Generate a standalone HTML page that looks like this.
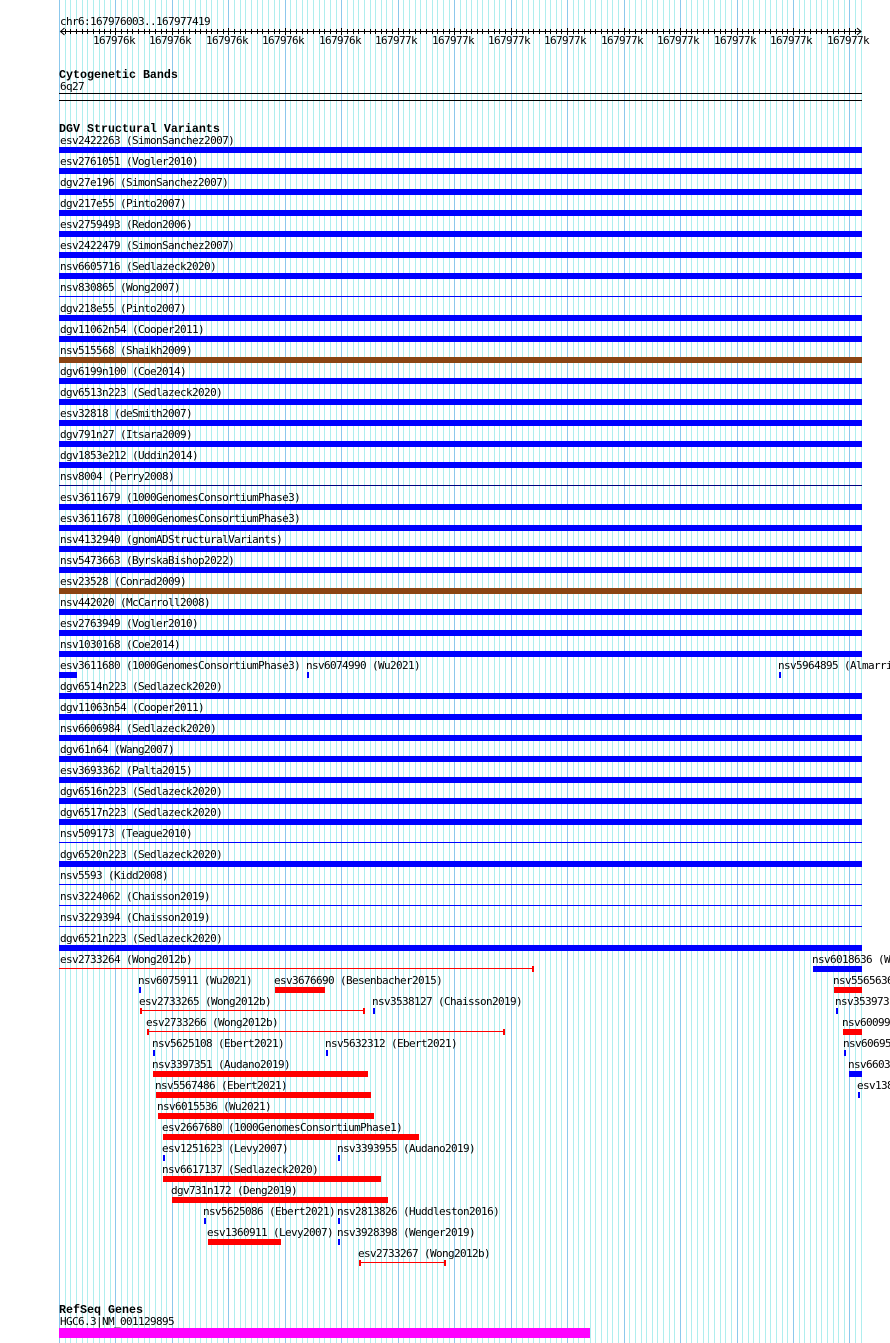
<!DOCTYPE html>
<html><head><meta charset="utf-8"><title>chr6:167976003..167977419</title>
<style>
html,body{margin:0;padding:0;background:#fff;width:890px;height:1343px;overflow:hidden}
svg{display:block;position:absolute;left:0;top:0}
text{font-family:"DejaVu Sans Mono","Liberation Mono",monospace;font-size:11px;fill:#000;letter-spacing:-.62px;white-space:pre}
text.h{font-family:"Liberation Mono","DejaVu Sans Mono",monospace;font-weight:bold;font-size:11.67px;letter-spacing:0}
</style></head><body>
<svg width="890" height="1343" viewBox="0 0 890 1343" xmlns="http://www.w3.org/2000/svg">
<g shape-rendering="crispEdges" fill="none" transform="translate(.5,0)">
<path stroke="#AFEEEE" d="M65 0v1343M70 0v1343M76 0v1343M82 0v1343M87 0v1343M93 0v1343M99 0v1343M104 0v1343M110 0v1343M121 0v1343M127 0v1343M132 0v1343M138 0v1343M144 0v1343M149 0v1343M155 0v1343M161 0v1343M166 0v1343M178 0v1343M183 0v1343M189 0v1343M195 0v1343M200 0v1343M206 0v1343M211 0v1343M217 0v1343M223 0v1343M234 0v1343M240 0v1343M245 0v1343M251 0v1343M257 0v1343M262 0v1343M268 0v1343M274 0v1343M279 0v1343M290 0v1343M296 0v1343M302 0v1343M307 0v1343M313 0v1343M319 0v1343M324 0v1343M330 0v1343M336 0v1343M347 0v1343M353 0v1343M358 0v1343M364 0v1343M370 0v1343M375 0v1343M381 0v1343M386 0v1343M392 0v1343M403 0v1343M409 0v1343M415 0v1343M420 0v1343M426 0v1343M432 0v1343M437 0v1343M443 0v1343M449 0v1343M460 0v1343M466 0v1343M471 0v1343M477 0v1343M482 0v1343M488 0v1343M494 0v1343M499 0v1343M505 0v1343M516 0v1343M522 0v1343M528 0v1343M533 0v1343M539 0v1343M545 0v1343M550 0v1343M556 0v1343M561 0v1343M573 0v1343M578 0v1343M584 0v1343M590 0v1343M595 0v1343M601 0v1343M607 0v1343M612 0v1343M618 0v1343M629 0v1343M635 0v1343M641 0v1343M646 0v1343M652 0v1343M657 0v1343M663 0v1343M669 0v1343M674 0v1343M686 0v1343M691 0v1343M697 0v1343M703 0v1343M708 0v1343M714 0v1343M720 0v1343M725 0v1343M731 0v1343M742 0v1343M748 0v1343M753 0v1343M759 0v1343M765 0v1343M770 0v1343M776 0v1343M782 0v1343M787 0v1343M799 0v1343M804 0v1343M810 0v1343M816 0v1343M821 0v1343M827 0v1343M833 0v1343M838 0v1343M844 0v1343M855 0v1343M861 0v1343"/>
<path stroke="#8CC8EC" d="M59 0v1343M115 0v1343M172 0v1343M228 0v1343M285 0v1343M341 0v1343M398 0v1343M454 0v1343M511 0v1343M567 0v1343M624 0v1343M680 0v1343M737 0v1343M793 0v1343M849 0v1343"/>
<!-- ruler -->
<path stroke="#000" d="M60 31.5H861M65 29v5M70 29v5M76 29v5M82 29v5M87 29v5M93 29v5M99 29v5M104 29v5M110 29v5M121 29v5M127 29v5M132 29v5M138 29v5M144 29v5M149 29v5M155 29v5M161 29v5M166 29v5M178 29v5M183 29v5M189 29v5M195 29v5M200 29v5M206 29v5M211 29v5M217 29v5M223 29v5M234 29v5M240 29v5M245 29v5M251 29v5M257 29v5M262 29v5M268 29v5M274 29v5M279 29v5M290 29v5M296 29v5M302 29v5M307 29v5M313 29v5M319 29v5M324 29v5M330 29v5M336 29v5M347 29v5M353 29v5M358 29v5M364 29v5M370 29v5M375 29v5M381 29v5M386 29v5M392 29v5M403 29v5M409 29v5M415 29v5M420 29v5M426 29v5M432 29v5M437 29v5M443 29v5M449 29v5M460 29v5M466 29v5M471 29v5M477 29v5M482 29v5M488 29v5M494 29v5M499 29v5M505 29v5M516 29v5M522 29v5M528 29v5M533 29v5M539 29v5M545 29v5M550 29v5M556 29v5M561 29v5M573 29v5M578 29v5M584 29v5M590 29v5M595 29v5M601 29v5M607 29v5M612 29v5M618 29v5M629 29v5M635 29v5M641 29v5M646 29v5M652 29v5M657 29v5M663 29v5M669 29v5M674 29v5M686 29v5M691 29v5M697 29v5M703 29v5M708 29v5M714 29v5M720 29v5M725 29v5M731 29v5M742 29v5M748 29v5M753 29v5M759 29v5M765 29v5M770 29v5M776 29v5M782 29v5M787 29v5M799 29v5M804 29v5M810 29v5M816 29v5M821 29v5M827 29v5M833 29v5M838 29v5M844 29v5M855 29v5M115 28v7M172 28v7M228 28v7M285 28v7M341 28v7M398 28v7M454 28v7M511 28v7M567 28v7M624 28v7M680 28v7M737 28v7M793 28v7M849 28v7"/>
</g>
<path fill="none" stroke="#000" d="M64.5 28L60.5 31.5L64.5 35M857 28L861 31.5L857 35"/>
<g shape-rendering="crispEdges">
<rect x="59" y="93" width="803" height="1" fill="#000"/>
<rect x="59" y="100" width="803" height="1" fill="#000"/>
<g fill="#0000ff">
<rect x="59" y="147" width="803" height="6"/><rect x="59" y="168" width="803" height="6"/><rect x="59" y="189" width="803" height="6"/><rect x="59" y="210" width="803" height="6"/><rect x="59" y="231" width="803" height="6"/><rect x="59" y="252" width="803" height="6"/><rect x="59" y="273" width="803" height="6"/>
<rect x="59" y="296" width="803" height="1"/>
<rect x="59" y="315" width="803" height="6"/><rect x="59" y="336" width="803" height="6"/>
<rect x="59" y="378" width="803" height="6"/><rect x="59" y="399" width="803" height="6"/><rect x="59" y="420" width="803" height="6"/><rect x="59" y="441" width="803" height="6"/><rect x="59" y="462" width="803" height="6"/>
<rect x="59" y="504" width="803" height="6"/><rect x="59" y="525" width="803" height="6"/><rect x="59" y="546" width="803" height="6"/><rect x="59" y="567" width="803" height="6"/>
<rect x="59" y="609" width="803" height="6"/><rect x="59" y="630" width="803" height="6"/><rect x="59" y="651" width="803" height="6"/>
<rect x="59" y="672" width="18" height="6"/><rect x="307" y="672" width="2" height="6"/><rect x="779" y="672" width="2" height="6"/>
<rect x="59" y="693" width="803" height="6"/><rect x="59" y="714" width="803" height="6"/><rect x="59" y="735" width="803" height="6"/><rect x="59" y="756" width="803" height="6"/><rect x="59" y="777" width="803" height="6"/><rect x="59" y="798" width="803" height="6"/><rect x="59" y="819" width="803" height="6"/>
<rect x="59" y="842" width="803" height="1"/>
<rect x="59" y="861" width="803" height="6"/>
<rect x="59" y="884" width="803" height="1"/><rect x="59" y="905" width="803" height="1"/><rect x="59" y="926" width="803" height="1"/>
<rect x="59" y="945" width="803" height="6"/>
<rect x="813" y="966" width="49" height="6"/>
<rect x="139" y="987" width="2" height="6"/>
<rect x="373" y="1008" width="2" height="6"/><rect x="836" y="1008" width="2" height="6"/>
<rect x="153" y="1050" width="2" height="6"/><rect x="326" y="1050" width="2" height="6"/><rect x="844" y="1050" width="2" height="6"/>
<rect x="849" y="1071" width="13" height="6"/>
<rect x="858" y="1092" width="2" height="6"/>
<rect x="163" y="1155" width="2" height="6"/><rect x="338" y="1155" width="2" height="6"/>
<rect x="204" y="1218" width="2" height="6"/><rect x="338" y="1218" width="2" height="6"/>
<rect x="338" y="1239" width="2" height="6"/>
</g>
<rect x="59" y="485" width="803" height="1" fill="#000080"/>
<rect x="59" y="357" width="803" height="6" fill="#8b4513"/>
<rect x="59" y="588" width="803" height="6" fill="#8b4513"/>
<g fill="#ff0000">
<rect x="59" y="968" width="475" height="1"/><rect x="532" y="966" width="2" height="6"/>
<rect x="275" y="987" width="50" height="6"/><rect x="834" y="987" width="28" height="6"/>
<rect x="140" y="1010" width="225" height="1"/><rect x="140" y="1008" width="2" height="6"/><rect x="363" y="1008" width="2" height="6"/>
<rect x="147" y="1031" width="358" height="1"/><rect x="147" y="1029" width="2" height="6"/><rect x="503" y="1029" width="2" height="6"/>
<rect x="843" y="1029" width="19" height="6"/>
<rect x="153" y="1071" width="215" height="6"/>
<rect x="156" y="1092" width="215" height="6"/>
<rect x="158" y="1113" width="216" height="6"/>
<rect x="163" y="1134" width="256" height="6"/>
<rect x="163" y="1176" width="218" height="6"/>
<rect x="172" y="1197" width="216" height="6"/>
<rect x="208" y="1239" width="73" height="6"/>
<rect x="359" y="1262" width="87" height="1"/><rect x="359" y="1260" width="2" height="6"/><rect x="444" y="1260" width="2" height="6"/>
</g>
<rect x="59" y="1328" width="531" height="10" fill="#ff00ff"/>
</g>
<text x="60" y="25">chr6:167976003..167977419</text>
<text x="93" y="44">167976k</text><text x="149" y="44">167976k</text><text x="206" y="44">167976k</text><text x="262" y="44">167976k</text><text x="319" y="44">167976k</text><text x="375" y="44">167977k</text><text x="432" y="44">167977k</text><text x="488" y="44">167977k</text><text x="544" y="44">167977k</text><text x="601" y="44">167977k</text><text x="657" y="44">167977k</text><text x="714" y="44">167977k</text><text x="770" y="44">167977k</text><text x="827" y="44">167977k</text>
<text class="h" x="59" y="78">Cytogenetic Bands</text>
<text x="60" y="90">6q27</text>
<text class="h" x="59" y="132">DGV Structural Variants</text>
<text x="60" y="144">esv2422263 (SimonSanchez2007)</text>
<text x="60" y="165">esv2761051 (Vogler2010)</text>
<text x="60" y="186">dgv27e196 (SimonSanchez2007)</text>
<text x="60" y="207">dgv217e55 (Pinto2007)</text>
<text x="60" y="228">esv2759493 (Redon2006)</text>
<text x="60" y="249">esv2422479 (SimonSanchez2007)</text>
<text x="60" y="270">nsv6605716 (Sedlazeck2020)</text>
<text x="60" y="291">nsv830865 (Wong2007)</text>
<text x="60" y="312">dgv218e55 (Pinto2007)</text>
<text x="60" y="333">dgv11062n54 (Cooper2011)</text>
<text x="60" y="354">nsv515568 (Shaikh2009)</text>
<text x="60" y="375">dgv6199n100 (Coe2014)</text>
<text x="60" y="396">dgv6513n223 (Sedlazeck2020)</text>
<text x="60" y="417">esv32818 (deSmith2007)</text>
<text x="60" y="438">dgv791n27 (Itsara2009)</text>
<text x="60" y="459">dgv1853e212 (Uddin2014)</text>
<text x="60" y="480">nsv8004 (Perry2008)</text>
<text x="60" y="501">esv3611679 (1000GenomesConsortiumPhase3)</text>
<text x="60" y="522">esv3611678 (1000GenomesConsortiumPhase3)</text>
<text x="60" y="543">nsv4132940 (gnomADStructuralVariants)</text>
<text x="60" y="564">nsv5473663 (ByrskaBishop2022)</text>
<text x="60" y="585">esv23528 (Conrad2009)</text>
<text x="60" y="606">nsv442020 (McCarroll2008)</text>
<text x="60" y="627">esv2763949 (Vogler2010)</text>
<text x="60" y="648">nsv1030168 (Coe2014)</text>
<text x="60" y="669">esv3611680 (1000GenomesConsortiumPhase3)</text><text x="306" y="669">nsv6074990 (Wu2021)</text><text x="778" y="669">nsv5964895 (Almarri2020)</text>
<text x="60" y="690">dgv6514n223 (Sedlazeck2020)</text>
<text x="60" y="711">dgv11063n54 (Cooper2011)</text>
<text x="60" y="732">nsv6606984 (Sedlazeck2020)</text>
<text x="60" y="753">dgv61n64 (Wang2007)</text>
<text x="60" y="774">esv3693362 (Palta2015)</text>
<text x="60" y="795">dgv6516n223 (Sedlazeck2020)</text>
<text x="60" y="816">dgv6517n223 (Sedlazeck2020)</text>
<text x="60" y="837">nsv509173 (Teague2010)</text>
<text x="60" y="858">dgv6520n223 (Sedlazeck2020)</text>
<text x="60" y="879">nsv5593 (Kidd2008)</text>
<text x="60" y="900">nsv3224062 (Chaisson2019)</text>
<text x="60" y="921">nsv3229394 (Chaisson2019)</text>
<text x="60" y="942">dgv6521n223 (Sedlazeck2020)</text>
<text x="60" y="963">esv2733264 (Wong2012b)</text><text x="812" y="963">nsv6018636 (Wu2021)</text>
<text x="138" y="984">nsv6075911 (Wu2021)</text><text x="274" y="984">esv3676690 (Besenbacher2015)</text><text x="833" y="984">nsv5565636</text>
<text x="139" y="1005">esv2733265 (Wong2012b)</text><text x="372" y="1005">nsv3538127 (Chaisson2019)</text><text x="835" y="1005">nsv353973</text>
<text x="146" y="1026">esv2733266 (Wong2012b)</text><text x="842" y="1026">nsv60099</text>
<text x="152" y="1047">nsv5625108 (Ebert2021)</text><text x="325" y="1047">nsv5632312 (Ebert2021)</text><text x="843" y="1047">nsv60695</text>
<text x="152" y="1068">nsv3397351 (Audano2019)</text><text x="848" y="1068">nsv6603</text>
<text x="155" y="1089">nsv5567486 (Ebert2021)</text><text x="857" y="1089">esv138</text>
<text x="157" y="1110">nsv6015536 (Wu2021)</text>
<text x="162" y="1131">esv2667680 (1000GenomesConsortiumPhase1)</text>
<text x="162" y="1152">esv1251623 (Levy2007)</text><text x="337" y="1152">nsv3393955 (Audano2019)</text>
<text x="162" y="1173">nsv6617137 (Sedlazeck2020)</text>
<text x="171" y="1194">dgv731n172 (Deng2019)</text>
<text x="203" y="1215">nsv5625086 (Ebert2021)</text><text x="337" y="1215">nsv2813826 (Huddleston2016)</text>
<text x="207" y="1236">esv1360911 (Levy2007)</text><text x="337" y="1236">nsv3928398 (Wenger2019)</text>
<text x="358" y="1257">esv2733267 (Wong2012b)</text>
<text class="h" x="59" y="1313">RefSeq Genes</text>
<text x="60" y="1325">HGC6.3|NM_001129895</text>
</svg>
</body></html>
